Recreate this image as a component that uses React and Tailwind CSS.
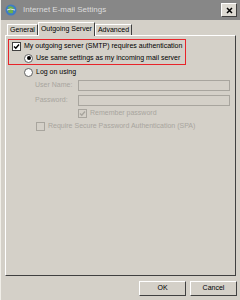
import { useState } from "react";

const font = { fontFamily: '"Liberation Sans", Tahoma, Arial, sans-serif' };

function Check({ checked, disabled }) {
  return (
    <span
      className={`flex h-[9px] w-[9px] shrink-0 items-center justify-center border ${
        disabled ? "border-[#a8a59e] bg-[#d4d0c8]" : "border-[#404040] bg-white"
      }`}
    >
      {checked && (
        <svg width="7" height="7" viewBox="0 0 7 7">
          <path
            d="M1 3.5 L2.8 5.3 L6 1.5"
            fill="none"
            stroke={disabled ? "#a8a59e" : "#000"}
            strokeWidth="1.4"
          />
        </svg>
      )}
    </span>
  );
}

function Radio({ checked }) {
  return (
    <span className="flex h-[9px] w-[9px] shrink-0 items-center justify-center rounded-full border border-[#606060] bg-white">
      {checked && <span className="h-[4px] w-[4px] rounded-full bg-black" />}
    </span>
  );
}

export default function App() {
  const [tab] = useState("Outgoing Server");
  const tabs = ["General", "Outgoing Server", "Advanced"];

  return (
    <div
      className="flex h-[300px] w-[240px] flex-col border-l border-[#f0eee8] bg-[#d4d0c8] text-[7px] text-black"
      style={font}
    >
      {/* title bar */}
      <div className="flex h-[20px] items-center bg-[#878787] pl-[4px] pr-[3px]">
        <svg width="12" height="12" viewBox="0 0 12 12">
          <circle cx="6" cy="6" r="5.5" fill="#3f7cc4" />
          <path d="M3 3 Q6 1 9 4 Q7 6 8 9 Q5 10 3 8 Q4 6 3 3Z" fill="#6fb04a" />
          <path d="M2 6 Q5 4 10 6" stroke="#e8e8e8" strokeWidth="1" fill="none" />
        </svg>
        <span className="ml-[6px] text-[8px] text-[#dcdcdc]">Internet E-mail Settings</span>
        <span className="ml-auto flex h-[14px] w-[16px] items-center justify-center border border-t-white border-l-white border-r-[#404040] border-b-[#404040] bg-[#dedbd4]">
          <svg width="7" height="7" viewBox="0 0 7 7">
            <path d="M1 1 L6 6 M6 1 L1 6" stroke="#000" strokeWidth="1.5" />
          </svg>
        </span>
      </div>

      {/* tabs */}
      <div className="mt-[2px] flex h-[13px] items-end pl-[6px]">
        {tabs.map((t) =>
          t === tab ? (
            <div
              key={t}
              className="relative -mb-[1px] flex h-[14px] items-center border border-b-0 border-l-white border-t-white border-r-[#404040] bg-[#d4d0c8] px-[2px] text-[7px]"
            >
              {t}
            </div>
          ) : (
            <div
              key={t}
              className="flex h-[11px] items-center border border-b-0 border-l-white border-t-white border-r-[#404040] px-[2px] text-[7px]"
            >
              {t}
            </div>
          )
        )}
      </div>

      {/* panel */}
      <div className="mx-[4px] h-[241px] border border-l-white border-t-white border-r-[#404040] border-b-[#404040] pl-[2px] pt-[3px]">
        <div className="w-[178px] border-[1.5px] border-[#e8242a] py-[1px] pl-[3px]">
          <div className="flex h-[10px] items-center gap-[3px]">
            <Check checked />
            <span>My outgoing server (SMTP) requires authentication</span>
          </div>
          <div className="mt-[2px] flex h-[10px] items-center gap-[3px] pl-[12px]">
            <Radio checked />
            <span>Use same settings as my incoming mail server</span>
          </div>
        </div>

        <div className="mt-[2px] flex h-[10px] items-center gap-[3px] pl-[16px]">
          <Radio />
          <span>Log on using</span>
        </div>

        <div className="mt-[3px] flex items-center pl-[27px] text-[#a8a59e]">
          <span className="w-[43px]">User Name:</span>
          <span className="h-[11px] w-[152px] border border-[#a8a59e] bg-[#d4d0c8]" />
        </div>
        <div className="mt-[4px] flex items-center pl-[27px] text-[#a8a59e]">
          <span className="w-[43px]">Password:</span>
          <span className="h-[11px] w-[152px] border border-[#a8a59e] bg-[#d4d0c8]" />
        </div>
        <div className="mt-[2px] flex h-[10px] items-center gap-[3px] pl-[70px] text-[#a8a59e]">
          <Check checked disabled />
          <span>Remember password</span>
        </div>
        <div className="mt-[3px] flex h-[10px] items-center gap-[3px] pl-[28px] text-[#a8a59e]">
          <Check disabled />
          <span>Require Secure Password Authentication (SPA)</span>
        </div>
      </div>

      {/* buttons */}
      <div className="mt-[5px] flex justify-end gap-[4px] pr-[3px]">
        {["OK", "Cancel"].map((b) => (
          <div
            key={b}
            className="flex h-[15px] w-[47px] items-center justify-center border border-l-white border-t-white border-r-[#404040] border-b-[#404040] text-[7px]"
          >
            {b}
          </div>
        ))}
      </div>
    </div>
  );
}
